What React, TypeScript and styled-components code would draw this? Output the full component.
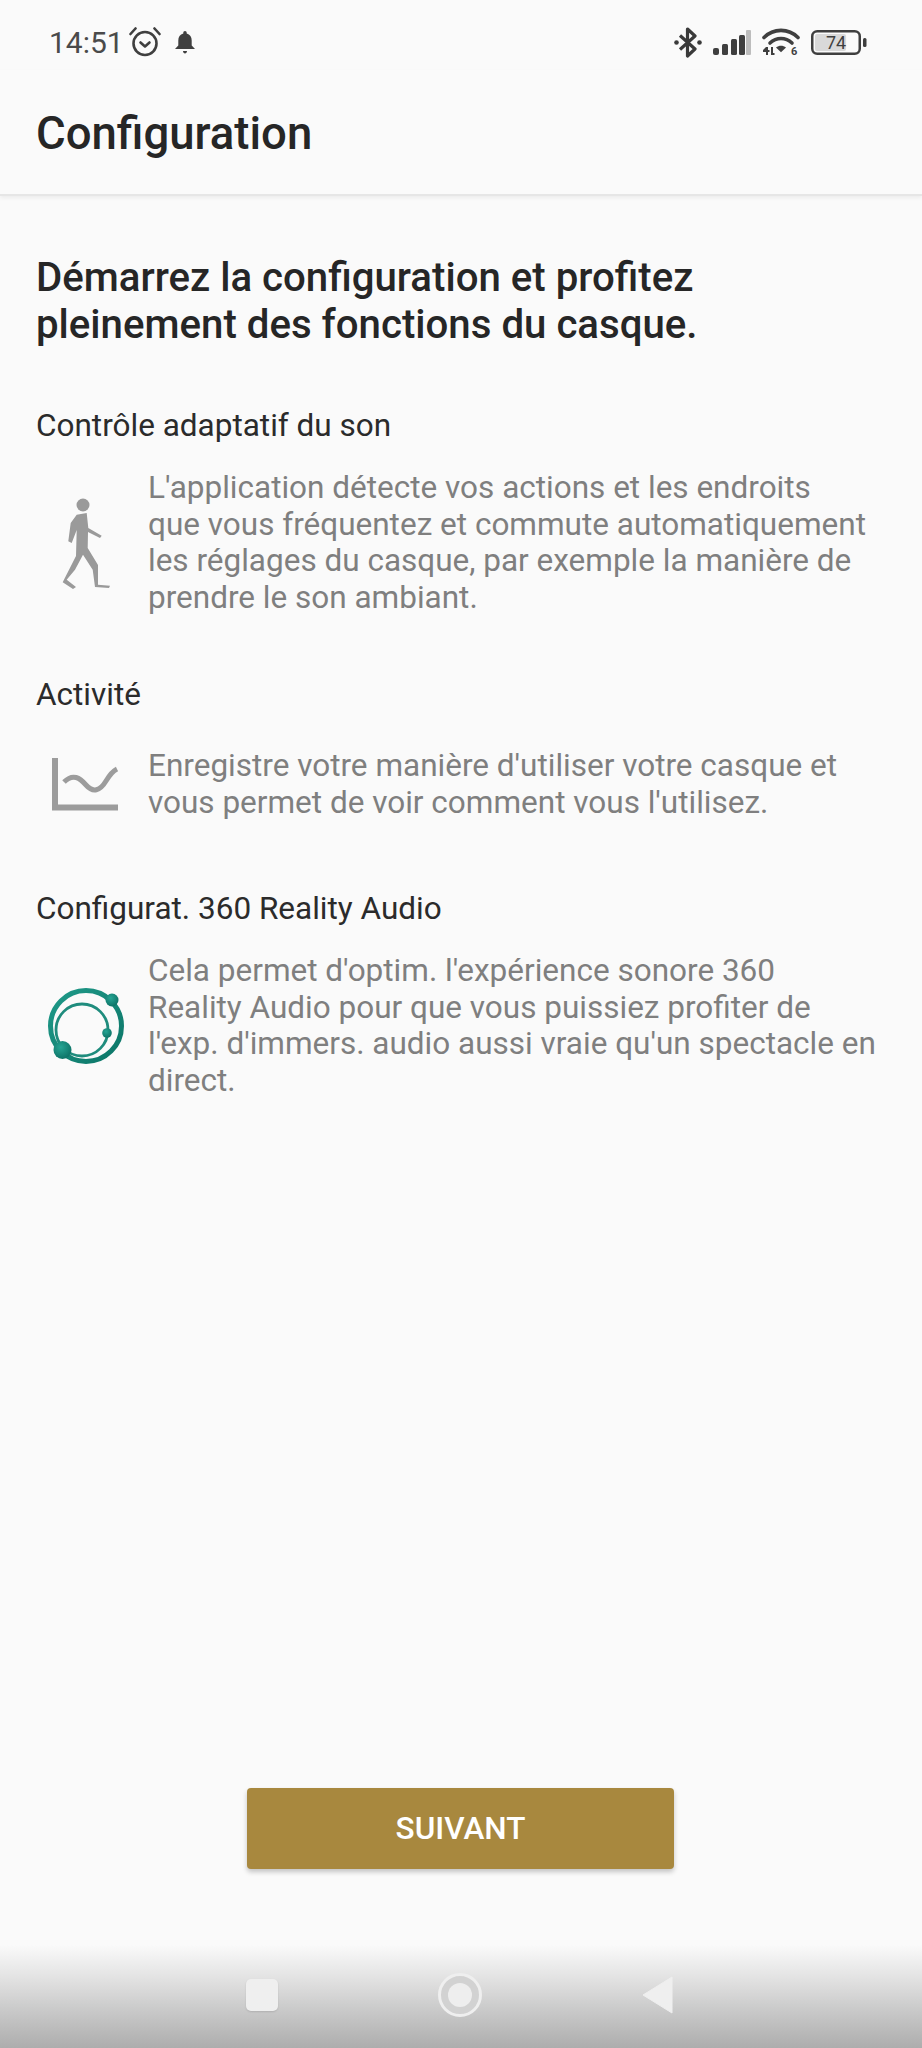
import React from 'react';
import styled, { createGlobalStyle } from 'styled-components';

const GlobalStyle = createGlobalStyle`
  html, body {
    margin: 0;
    padding: 0;
    background: #fafafa;
  }
  * {
    box-sizing: border-box;
  }
`;

const Page = styled.div`
  width: 922px;
  height: 2048px;
  display: flex;
  flex-direction: column;
  background: #fafafa;
  font-family: Roboto, "Liberation Sans", sans-serif;
  overflow: hidden;
`;

const StatusBar = styled.div`
  height: 70px;
  padding: 18px 55px 0 49px;
  display: flex;
  align-items: flex-start;
  justify-content: space-between;
`;

const StatusGroup = styled.div<{ $gap: number }>`
  display: flex;
  align-items: center;
  height: 52px;
  margin-top: -2px;
  gap: ${p => p.$gap}px;
`;

const Clock = styled.span`
  font-size: 30px;
  color: #4a4a4a;
  margin-right: -9px;
`;

const TopBar = styled.header`
  height: 126px;
  padding: 2px 36px 0;
  display: flex;
  align-items: center;
  border-bottom: 2px solid #e6e6e6;
  box-shadow: 0 2px 4px rgba(0, 0, 0, 0.06);
`;

const Title = styled.h1`
  margin: 0;
  font-size: 45.5px;
  font-weight: 500;
  color: #262626;
`;

const Content = styled.main`
  flex: 1;
  padding: 58px 36px 0;
`;

const Headline = styled.h2`
  margin: 0 0 60px;
  font-size: 40.2px;
  line-height: 47px;
  font-weight: 500;
  color: #262626;
`;

const Feature = styled.section`
  margin-bottom: 60px;
`;

const FeatureTitle = styled.h3`
  margin: 0 0 26px;
  font-size: 31.5px;
  line-height: 36px;
  font-weight: 400;
  color: #2b2b2b;
`;

const FeatureRow = styled.div`
  display: flex;
  align-items: center;
  min-height: 92px;
`;

const FeatureIcon = styled.div`
  width: 112px;
  flex: none;
  display: flex;
  justify-content: center;
  padding-right: 13px;
`;

const FeatureText = styled.p`
  margin: 0;
  font-size: 31.5px;
  line-height: 36.7px;
  color: #7f7f7f;
  white-space: nowrap;
`;

const Footer = styled.div`
  display: flex;
  justify-content: center;
  padding: 0 1px 76px 0;
`;

const NextButton = styled.button`
  width: 427px;
  height: 81px;
  border: none;
  border-radius: 4px;
  background: #a8883e;
  color: #fff;
  font-family: inherit;
  font-size: 31.5px;
  font-weight: 500;
  box-shadow: 0 3px 5px rgba(0, 0, 0, 0.22);
`;

const NavBar = styled.nav`
  height: 103px;
  padding: 0 249px 4px 246px;
  display: flex;
  align-items: center;
  justify-content: space-between;
  background: linear-gradient(to bottom, #fafafa 0%, #e4e4e4 30%, #c8c8c8 65%, #adadad 100%);
`;

const NavSquare = styled.div`
  width: 32px;
  height: 32px;
  border-radius: 5px;
  background: #efefef;
  box-shadow: 0 1px 2px rgba(0, 0, 0, 0.12);
`;

const NavCircle = styled.div`
  width: 44px;
  height: 44px;
  border-radius: 50%;
  border: 3px solid #efefef;
  background: #d2d2d2;
  display: flex;
  align-items: center;
  justify-content: center;

  &::after {
    content: '';
    width: 24px;
    height: 24px;
    border-radius: 50%;
    background: #eeeeee;
  }
`;

const AlarmIcon = () => (
  <svg width="32" height="30" viewBox="0 0 32 30" fill="none" stroke="#3f3f3f" strokeWidth="2.6" strokeLinecap="round" strokeLinejoin="round">
    <circle cx="16" cy="16.5" r="11.5" />
    <path d="M11.5 15.5 16 19.5l4.500-4" />
    <path d="M1.500 7 6.500 1.500M30.500 7 25.500 1.500" />
  </svg>
);

const BellIcon = () => (
  <svg width="20" height="23" viewBox="0 0 20 23">
    <path fill="#3f3f3f" d="M10 0c1 0 1.700.8 1.700 1.800v.7C15 3.400 16.700 6 16.700 9.500v5L20 18H0l3.300-3.500v-5C3.300 6 5 3.400 8.300 2.500v-.7C8.300.8 9 0 10 0zM8 20h4c0 1.200-.9 2.500-2 2.500S8 21.200 8 20z" />
  </svg>
);

const BluetoothIcon = () => (
  <svg width="28" height="31" viewBox="0 0 28 31" fill="none" stroke="#3a3a3a" strokeWidth="3.2" strokeLinejoin="round">
    <path d="M6 8.500 21 22l-7.500 7V2L21 9 6 22.500" />
    <circle cx="2.500" cy="15.500" r="2.300" fill="#3a3a3a" stroke="none" />
    <circle cx="25.500" cy="15.500" r="2.300" fill="#3a3a3a" stroke="none" />
  </svg>
);

const SignalIcon = () => (
  <svg width="38" height="25" viewBox="0 0 38 25">
    <rect x="0" y="18" width="6" height="7" rx="2" fill="#3f3f3f" />
    <rect x="9" y="14" width="6" height="11" rx="1.500" fill="#3f3f3f" />
    <rect x="18" y="9" width="6" height="16" rx="1.500" fill="#3f3f3f" />
    <rect x="26" y="5" width="6" height="20" rx="1.500" fill="#3f3f3f" />
    <rect x="33" y="0" width="5" height="25" rx="1" fill="#bdbdbd" />
  </svg>
);

const WifiIcon = () => (
  <svg width="38" height="30" viewBox="0 0 38 30">
    <g fill="none" stroke="#3f3f3f" strokeWidth="3.600" strokeLinecap="round">
      <path d="M2 10.500C11.500 1 26.500 1 36 10.500" />
      <path d="M8 16c6.500-6 15.500-6 22 0" />
    </g>
    <path fill="#3f3f3f" d="M14 20.500c3-2.500 7-2.500 10 0l-5 4.800z" />
    <path fill="#3f3f3f" d="M4 20h2v3h1.500v2H6v3H4v-3H1v-2zM9 20h2v6h1.500v2H9z" />
    <text x="29" y="28" fontFamily="Roboto, sans-serif" fontSize="11" fontWeight="700" fill="#3f3f3f">6</text>
  </svg>
);

const BatteryIcon = ({ level }: { level: number }) => (
  <svg width="56" height="25" viewBox="0 0 56 25">
    <rect x="1.250" y="1.250" width="47.500" height="22.500" rx="5" fill="none" stroke="#3f3f3f" strokeWidth="2.500" />
    <rect x="4" y="4" width={42 * level / 100} height="17" rx="2" fill="#d9d9d9" />
    <rect x="52" y="8" width="3.500" height="9" rx="1.500" fill="#3f3f3f" />
    <text x="25" y="19" textAnchor="middle" fontFamily="Roboto, sans-serif" fontSize="18" fill="#3f3f3f">{level}</text>
  </svg>
);

const WalkerIcon = () => (
  <svg width="52" height="96" viewBox="40 22 52 96">
    <circle cx="63" cy="32" r="6.500" fill="#9a9a9a" />
    <path
      fill="#9a9a9a"
      strokeLinejoin="round"
      d="M66.700 40 68.300 55 81.700 62.700 80 65 68 59 67.700 75 78 92 78 111.700 90 112.700 89 115 75 114 72.700 96.700 63 81.700 55 96.700 46.700 106.700 56 114 53 116 42.700 109.300 56 83 56.700 57 51.700 70 48.300 68.300 50.700 50 56.700 41.700z"
    />
  </svg>
);

const ChartIcon = () => (
  <svg width="70" height="56" viewBox="33 24 70 56" fill="none" stroke="#9c9c9c">
    <path d="M37 25V74.500H100" strokeWidth="6" />
    <path d="M46 49C55 40 62 45 68 52 75 60 82 58 88 48 91 43 95 38 99 36" strokeWidth="5" />
  </svg>
);

const OrbitIcon = () => (
  <svg width="78" height="78" viewBox="26 25 78 78" fill="none">
    <defs>
      <linearGradient id="orbitRing" x1="0" y1="0" x2="1" y2="1">
        <stop offset="0" stopColor="#1f9a89" />
        <stop offset="1" stopColor="#0c7567" />
      </linearGradient>
      <radialGradient id="orbitBall" cx="0.4" cy="0.35" r="0.7">
        <stop offset="0" stopColor="#26a594" />
        <stop offset="1" stopColor="#0c7064" />
      </radialGradient>
    </defs>
    <circle cx="65" cy="64" r="35.500" stroke="url(#orbitRing)" strokeWidth="5" />
    <circle cx="61" cy="68" r="26" stroke="#1f8c7d" strokeWidth="2.800" />
    <circle cx="91" cy="38" r="6.500" fill="url(#orbitBall)" />
    <circle cx="86" cy="71" r="4.800" fill="url(#orbitBall)" />
    <circle cx="41.500" cy="88" r="9" fill="url(#orbitBall)" />
  </svg>
);

const BackTriangle = () => (
  <svg width="31" height="38" viewBox="0 0 31 38">
    <path fill="#efefef" stroke="#efefef" strokeWidth="1" strokeLinejoin="round" d="M30 1V37L1 19z" />
  </svg>
);

const features = [
  {
    title: 'Contrôle adaptatif du son',
    icon: <WalkerIcon />,
    lines: [
      "L'application détecte vos actions et les endroits",
      'que vous fréquentez et commute automatiquement',
      'les réglages du casque, par exemple la manière de',
      'prendre le son ambiant.',
    ],
  },
  {
    title: 'Activité',
    icon: <ChartIcon />,
    lines: [
      "Enregistre votre manière d'utiliser votre casque et",
      "vous permet de voir comment vous l'utilisez.",
    ],
  },
  {
    title: 'Configurat. 360 Reality Audio',
    icon: <OrbitIcon />,
    lines: [
      "Cela permet d'optim. l'expérience sonore 360",
      'Reality Audio pour que vous puissiez profiter de',
      "l'exp. d'immers. audio aussi vraie qu'un spectacle en",
      'direct.',
    ],
  },
];

const App: React.FC = () => (
  <Page>
    <GlobalStyle />
    <StatusBar>
      <StatusGroup $gap={14}>
        <Clock>14:51</Clock>
        <AlarmIcon />
        <BellIcon />
      </StatusGroup>
      <StatusGroup $gap={11}>
        <BluetoothIcon />
        <SignalIcon />
        <WifiIcon />
        <BatteryIcon level={74} />
      </StatusGroup>
    </StatusBar>
    <TopBar>
      <Title>Configuration</Title>
    </TopBar>
    <Content>
      <Headline>
        Démarrez la configuration et profitez
        <br />
        pleinement des fonctions du casque.
      </Headline>
      {features.map(feature => (
        <Feature key={feature.title}>
          <FeatureTitle>{feature.title}</FeatureTitle>
          <FeatureRow>
            <FeatureIcon>{feature.icon}</FeatureIcon>
            <FeatureText>
              {feature.lines.map((line, i) => (
                <React.Fragment key={line}>
                  {i > 0 && <br />}
                  {line}
                </React.Fragment>
              ))}
            </FeatureText>
          </FeatureRow>
        </Feature>
      ))}
    </Content>
    <Footer>
      <NextButton>SUIVANT</NextButton>
    </Footer>
    <NavBar>
      <NavSquare />
      <NavCircle />
      <BackTriangle />
    </NavBar>
  </Page>
);

export default App;
